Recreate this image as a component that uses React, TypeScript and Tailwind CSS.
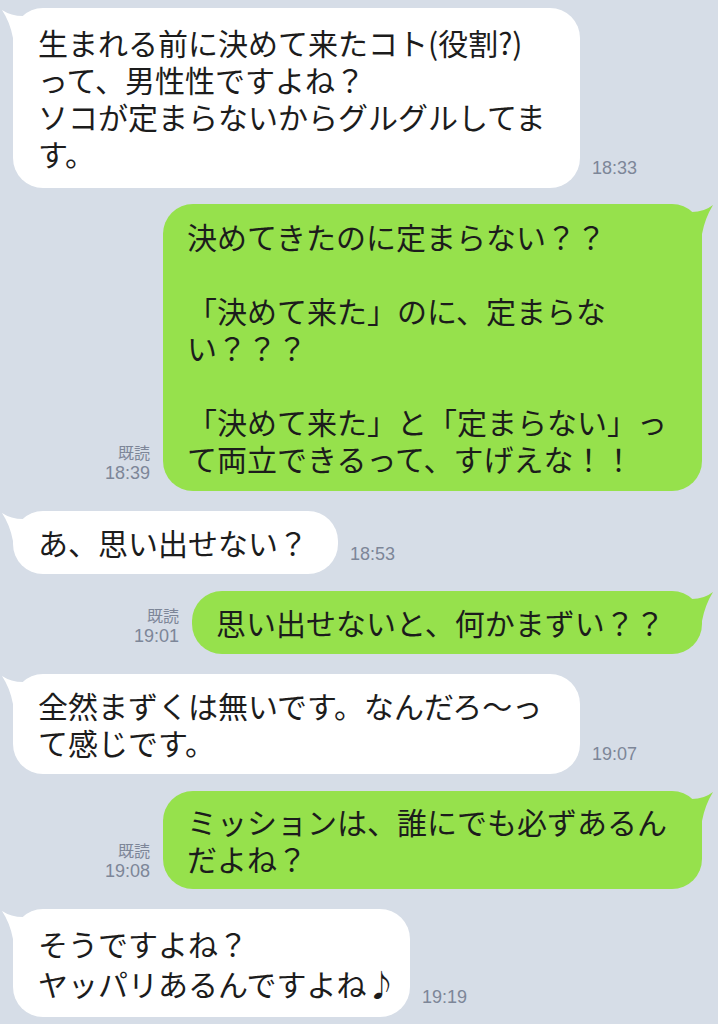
const jp = { fontFamily: '"Noto Sans CJK JP", sans-serif' };
const tm = { fontFamily: '"Liberation Sans", "Noto Sans CJK JP", sans-serif' };

type Msg = {
  side: "in" | "out";
  lines: string[];
  time: string;
  box: string;
  mt: string;
  lh?: string;
};

const messages: Msg[] = [
  {
    side: "in",
    lines: ["生まれる前に決めて来たコト(役割?)", "って、男性性ですよね？", "ソコが定まらないからグルグルしてま", "す。"],
    time: "18:33",
    box: "w-[567px] py-[16px]",
    mt: "",
  },
  {
    side: "out",
    lines: [
      "決めてきたのに定まらない？？",
      "",
      "「決めて来た」のに、定まらな",
      "い？？？",
      "",
      "「決めて来た」と「定まらない」っ",
      "て両立できるって、すげえな！！",
    ],
    time: "18:39",
    box: "w-[539px] py-[14px]",
    mt: "mt-[16px]",
  },
  { side: "in", lines: ["あ、思い出せない？"], time: "18:53", box: "py-[13px]", mt: "mt-[20px]" },
  { side: "out", lines: ["思い出せないと、何かまずい？？"], time: "19:01", box: "w-[510px] py-[13px]", mt: "mt-[17px]" },
  {
    side: "in",
    lines: ["全然まずくは無いです。なんだろ〜っ", "て感じです。"],
    time: "19:07",
    box: "w-[567px] py-[13px]",
    mt: "mt-[20px]",
  },
  {
    side: "out",
    lines: ["ミッションは、誰にでも必ずあるん", "だよね？"],
    time: "19:08",
    box: "w-[539px] py-[12px]",
    mt: "mt-[17px]",
  },
  {
    side: "in",
    lines: ["そうですよね？", "ヤッパリあるんですよね♪"],
    time: "19:19",
    box: "w-[397px] py-[14px]",
    mt: "mt-[20px]",
    lh: "h-[40px] leading-[40px]",
  },
];

function Tail({ side }: { side: "in" | "out" }) {
  if (side === "in") {
    return (
      <svg className="absolute -left-[12px] top-0 overflow-visible" width="24" height="32" viewBox="-12 0 24 32">
        <path d="M-11 2 Q-2 8 10 8 L10 30 L0 30 Q-3 14 -11 2 Z" fill="#ffffff" />
      </svg>
    );
  }
  return (
    <svg className="absolute -right-[12px] top-0 overflow-visible" width="24" height="32" viewBox="-12 0 24 32">
      <path d="M11 1 Q2 8 -10 8 L-10 30 L0 30 Q3 14 11 1 Z" fill="#96e14c" />
    </svg>
  );
}

function Bubble({ m }: { m: Msg }) {
  const isIn = m.side === "in";
  return (
    <div
      className={`relative rounded-[30px] ${isIn ? "bg-white pl-[25px] pr-[30px]" : "bg-[#96e14c] pl-[24px] pr-[30px]"} ${m.box}`}
    >
      <Tail side={m.side} />
      <div className="relative text-[30px] text-[#1c1c1c]" style={jp}>
        {m.lines.map((l, i) => (
          <div key={i} className={`whitespace-nowrap ${m.lh ?? "h-[37px] leading-[37px]"}`}>
            {l || "\u00a0"}
          </div>
        ))}
      </div>
    </div>
  );
}

export default function App() {
  return (
    <div className="w-[718px] h-[1024px] overflow-hidden bg-[#d6dde7] pt-[8px] flex flex-col">
      {messages.map((m, i) => {
        if (m.side === "in") {
          return (
            <div key={i} className={`flex items-end pl-[13px] ${m.mt}`}>
              <Bubble m={m} />
              <div className="ml-[12px] mb-[10px] text-[18px] leading-[20px] text-[#7d8698]" style={tm}>
                {m.time}
              </div>
            </div>
          );
        }
        return (
          <div key={i} className={`flex items-end justify-end pr-[16px] ${m.mt}`}>
            <div className="mr-[13px] mb-[8px] flex flex-col items-end text-[#7d8698]" style={tm}>
              <span className="text-[16px] leading-[22px]" style={jp}>既読</span>
              <span className="text-[18px] leading-[20px]">{m.time}</span>
            </div>
            <Bubble m={m} />
          </div>
        );
      })}
    </div>
  );
}
